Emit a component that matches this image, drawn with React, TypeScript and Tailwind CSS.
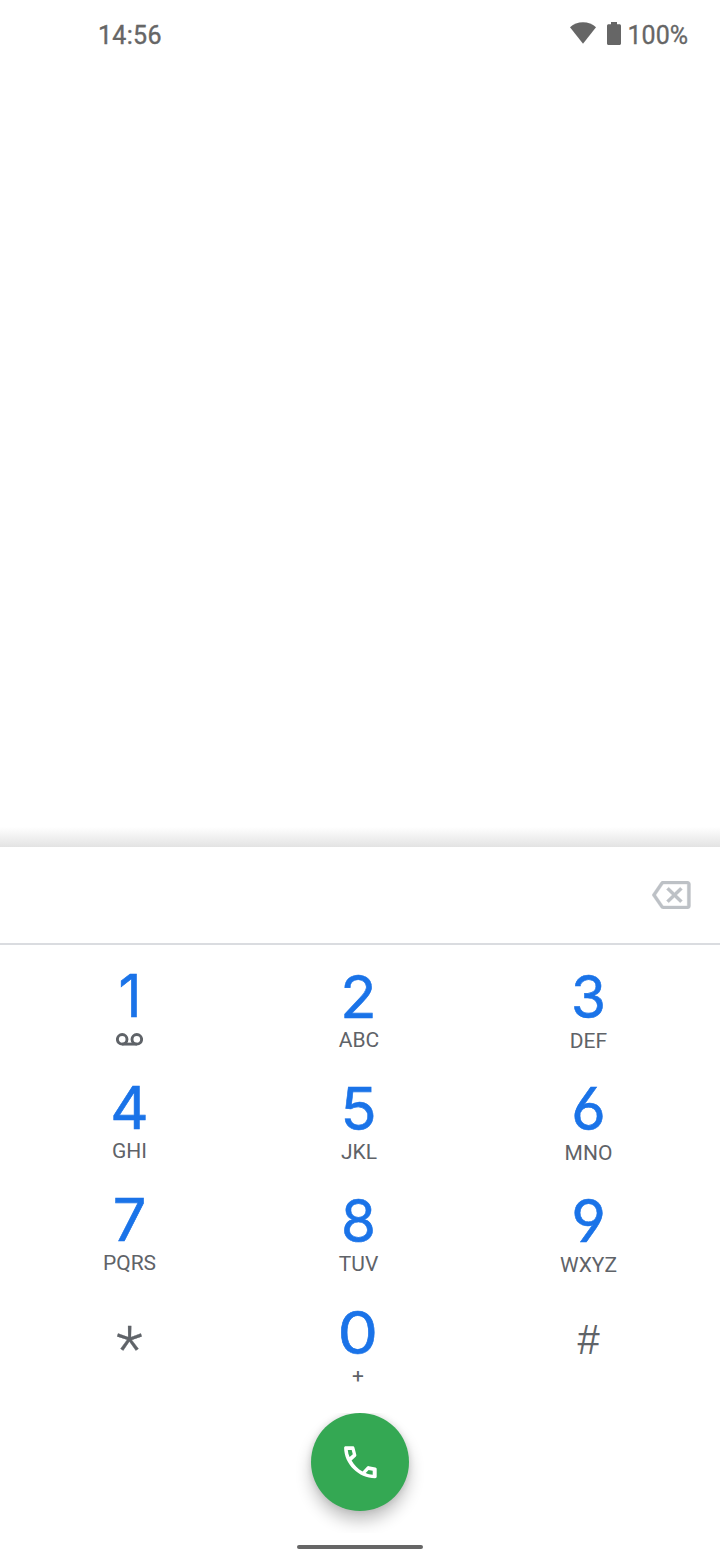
import { ReactNode } from "react";
import clsx from "clsx";

type Key = {
  digit: string;
  label: ReactNode;
  digitClass?: string;
  labelClass?: string;
};

function VoicemailIcon() {
  return (
    <svg
      viewBox="0 0 27 13"
      className="mt-[5px] mr-px h-[13px] w-[27px]"
      fill="none"
      stroke="currentColor"
      strokeWidth="2.9"
    >
      <circle cx="6.2" cy="6.3" r="4.8" />
      <circle cx="20.8" cy="6.3" r="4.8" />
      <path d="M6.2 11.1h14.6" />
    </svg>
  );
}

function BackspaceIcon() {
  return (
    <svg
      viewBox="0 3 24 18"
      className="h-[28px] w-[38.5px]"
      preserveAspectRatio="none"
      fill="currentColor"
      stroke="currentColor"
      strokeWidth="0.2"
    >
      <path d="M22 3H7c-.69 0-1.23.35-1.59.88L0 12l5.41 8.11c.36.53.9.89 1.59.89h15c1.1 0 2-.9 2-2V5c0-1.1-.9-2-2-2zm0 16H7.07L2.4 12l4.66-7H22v14zm-11.59-2L14 13.41 17.59 17 19 15.59 15.41 12 19 8.41 17.59 7 14 10.59 10.41 7 9 8.41 12.59 12 9 15.59z" />
    </svg>
  );
}

function CallIcon() {
  return (
    <svg viewBox="0 0 33 33" className="h-[33px] w-[33px]" fill="currentColor" fillRule="evenodd">
      <path d="M1.6.3h7.2c.8 0 1.4.5 1.6 1.3l1.9 7.2c.2.6 0 1.2-.4 1.6L7.6 14.6c2.5 4.7 6.3 8.5 11 11l4.6-5c.4-.4 1-.6 1.6-.4l6.6 1.4c.8.2 1.3.9 1.3 1.6v7.4c0 .9-.7 1.6-1.6 1.6C14.6 32.2.3 18.2.1 1.8.1 1 .8.3 1.6.3zM3.8 3.9c.2 2.5.8 4.9 1.8 7.200l3.200-2.800-1.100-4.400H3.800zM21.700 27.100c2.200 1 4.600 1.500 7 1.600v-3.900l-4.100-.9-2.900 3.200z" />
    </svg>
  );
}

function StatusBar() {
  return (
    <header className="flex h-[70px] shrink-0 items-center justify-between pr-8 pl-[98px] text-[25px] text-[#666666] [-webkit-text-stroke:0.4px_#666666]">
      <span className="mt-px tracking-[0.3px]">14:56</span>
      <div className="flex items-center">
        <svg viewBox="0 0 26 22" className="mr-[11px] mb-1 h-[22px] w-[26px]" fill="currentColor">
          <path d="M0 5.2C3.6 2 8 .2 13 .2s9.4 1.8 13 5L13 21.8z" />
        </svg>
        <svg viewBox="0 0 14 23" className="mr-[7px] mb-1 h-[23px] w-[14px]" fill="currentColor">
          <path d="M4 0h6v2.200h2.500c.8 0 1.500.7 1.500 1.500v17.800c0 .8-.7 1.500-1.500 1.500h-11C.7 23 0 22.300 0 21.500V3.700c0-.8.7-1.500 1.500-1.500H4z" />
        </svg>
        <span className="mt-px [-webkit-text-stroke:0.3px_#666666]">100%</span>
      </div>
    </header>
  );
}

const KEYS: Key[] = [
  { digit: "1", label: <VoicemailIcon />, digitClass: "pl-px scale-x-95 -translate-y-px" },
  { digit: "2", label: "ABC", labelClass: "pl-px" },
  { digit: "3", label: "DEF", labelClass: "mt-px", digitClass: "scale-x-95" },
  { digit: "4", label: "GHI", labelClass: "-mt-px", digitClass: "-translate-y-px" },
  { digit: "5", label: "JKL", labelClass: "pl-px" },
  { digit: "6", label: "MNO", labelClass: "mt-px" },
  { digit: "7", label: "PQRS", labelClass: "-mt-px", digitClass: "-translate-y-px" },
  { digit: "8", label: "TUV", digitClass: "scale-x-95" },
  { digit: "9", label: "WXYZ", labelClass: "mt-px" },
];

function DialKey({ digit, label, digitClass, labelClass }: Key) {
  return (
    <button className="flex h-[112px] flex-col items-center">
      <span
        className={clsx(
          "mb-[2px] h-[60px] font-['Inter',sans-serif] text-[59.5px] leading-[60px] text-[#1a73e8] [-webkit-text-stroke:0.6px_#1a73e8] [font-feature-settings:'cv03','cv04']",
          digitClass
        )}
      >
        {digit}
      </span>
      <span className={clsx("text-[21px] leading-6", labelClass)}>{label}</span>
    </button>
  );
}

function Dialpad() {
  return (
    <div className="ml-[15px] grid grid-cols-[229px_229px_231px] pt-[21px] text-[#5f6368]">
      {KEYS.map((key) => (
        <DialKey key={key.digit} {...key} />
      ))}
      <button className="flex h-[112px] justify-center pt-[16px] text-[62px] leading-[62px] font-light [-webkit-text-stroke:0.3px_#5f6368]">
        *
      </button>
      <DialKey digit="0" label="+" digitClass="scale-x-108 pr-px" labelClass="pr-px" />
      <button className="flex h-[112px] justify-center pt-[17px] font-['Liberation_Sans',sans-serif] text-[42px] leading-[42px]">
        <span className="scale-x-95">#</span>
      </button>
    </div>
  );
}

function App() {
  return (
    <div className="flex h-[1560px] w-[720px] flex-col overflow-hidden bg-white font-['Roboto',sans-serif]">
      <StatusBar />
      <main className="flex-1" />
      <div className="h-5 bg-linear-to-b from-white to-[#e3e3e3]" />
      <section className="flex h-[713px] shrink-0 flex-col bg-white">
        <div className="flex h-[98px] shrink-0 items-center justify-end border-b-2 border-[#dadce0] pr-[29.5px] text-[#bdc1c6]">
          <BackspaceIcon />
        </div>
        <Dialpad />
        <div className="-mt-px flex h-[120px] shrink-0 justify-center overflow-hidden">
          <button className="flex h-[98px] w-[98px] items-center justify-center rounded-full bg-[#34a853] text-white shadow-[0_10px_16px_rgba(0,0,0,0.24),0_0_6px_rgba(0,0,0,0.12)]">
            <CallIcon />
          </button>
        </div>
        <div className="mx-auto mt-3 h-1 w-[126px] shrink-0 rounded-full bg-[#666666]" />
      </section>
    </div>
  );
}

export default App;
